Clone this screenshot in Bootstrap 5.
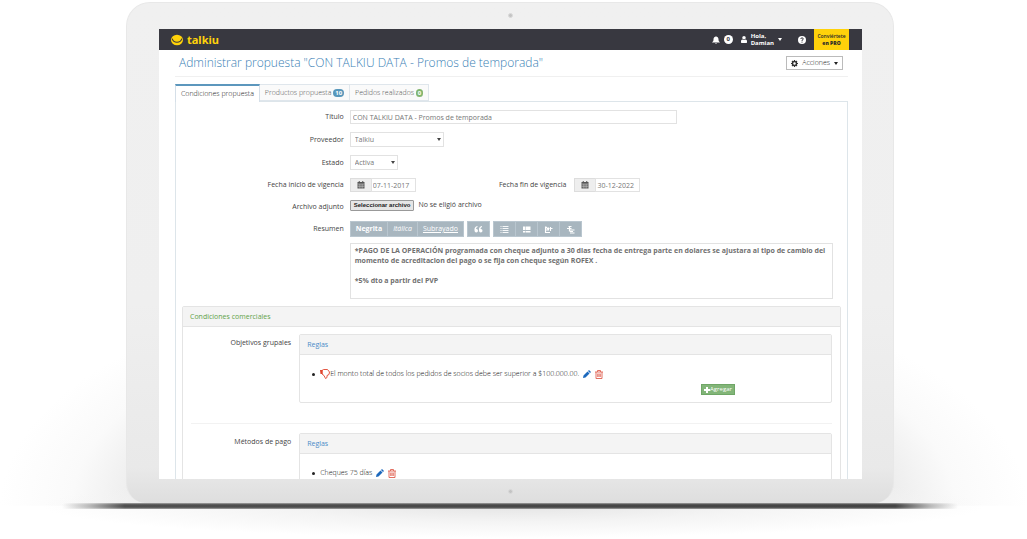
<!DOCTYPE html>
<html lang="es">
<head>
<meta charset="utf-8">
<meta name="viewport" content="width=device-width, initial-scale=1">
<title>Talkiu - Administrar propuesta</title>
<link href="https://cdn.jsdelivr.net/npm/bootstrap@5.3.0/dist/css/bootstrap.min.css" rel="stylesheet">
<style>
body{font-family:"Open Sans","Liberation Sans",sans-serif;font-size:7px;line-height:10px;color:#444;background:#fff;overflow-x:hidden}
svg{display:block;flex:none}
.stage{padding:2px 7px 29px 0;background:radial-gradient(ellipse 46% 6% at 50% 94%,#e4e4e4 0,#f4f4f4 50%,transparent 100%) no-repeat,radial-gradient(ellipse 50% 46% at 50% 100%,#e6e6e6 0,#ededed 74%,#fafafa 86%,#fff 100%) 0 0/100% 94% no-repeat}
.device{max-width:768px;padding:10px 31px 9px 32px;border:1px solid #e8e8e8;border-bottom:0;border-radius:24px 24px 20px 20px;background:linear-gradient(#f0f0f0 0,#efefef 60%,#e9e9e9 93%,#dedede 100%)}
.lens{width:5px;height:5px;border-radius:50%;background:#c4c4c4;border:1px solid #dadada}
.screen{aspect-ratio:703/450;overflow:hidden;background:#fff;margin:11px 0 10px}
.base{max-width:896px;height:6px;background:linear-gradient(rgba(255,255,255,.5) 0,transparent 30%,transparent 70%,rgba(255,255,255,.5) 100%),linear-gradient(90deg,transparent,#bbb 3%,#505050 7%,#484848 50%,#444 93%,#bbb 97%,transparent)}
.topbar{background:#383840;height:21px;color:#fff;padding:0 13px 0 12px}
.brand{color:#ffd20a;font:bold 11px/20px "Noto Sans","Open Sans",sans-serif}
.topbar a,.topbar button{color:#fff;text-decoration:none;border:0;background:none;padding:0;font-size:6px;line-height:7px;text-align:left}
.topbar .count{background:#fff;color:#383840;border-radius:50%;width:9px;height:9px;line-height:9px;text-align:center;font-weight:bold}
.topbar .pro{background:#ffd20a;color:#26262b;width:35px;height:21px;text-align:center;padding-top:4px;font-size:5px;font-weight:600}
.caret{display:inline-block;border:2px solid transparent;border-top:3px solid currentColor;border-bottom:0}
.heading{margin:0 14px 7px 16px;padding:0 5px 0 4px;height:27px;border-bottom:1px solid #f0f0f0}
.heading h1{font-size:12px;line-height:16px;font-weight:300;color:#3a7fb5}
.btn-acc{border:1px solid #bbb;border-radius:0;font-size:7px;font-weight:300;line-height:12px;padding:0 4px;color:#222;background:#fff}
.tabs{margin:0 14px 0 16px;border:0}
.tabs .nav-link{border:1px solid #dfe6ec;border-left-width:0;border-radius:0;padding:3px 5px;height:17px;font-size:7px;font-weight:300;line-height:10px;color:#555;background:#fafafa;margin:0}
.tabs .nav-link.active{border:1px solid #d5dfe8;border-top:2px solid #5c97bd;border-bottom:0;background:#fff;color:#222;height:18px;margin-bottom:-1px;padding-top:3px}
.pill{display:inline-block;font-size:6px;line-height:8px;padding:0 2px;border-radius:4px;color:#fff;font-weight:bold}
.pill-blue{background:#5897bb}.pill-green{background:#82b56f}
.sheet{margin:0 14px 0 16px;border:1px solid #dde5ea;padding:4px 6px 20px}
.sheet .row{--bs-gutter-x:6px}
.form-rows>.row{margin:0;min-height:22px;align-items:center}
.form-rows>.row.tall{min-height:23px}
.form-rows label,.rule-name{text-align:right}
.form-control,.form-select{font-size:7px;line-height:10px;color:#777;border:1px solid #e2e2e2;border-radius:0;min-height:0;padding:1px 2px;height:14px;background-color:#fff}
.form-select{height:15px;padding:1px 4px;appearance:none;background-image:none}
.pick{position:relative;display:inline-block}
.pick .caret{position:absolute;right:3px;top:6px;color:#444;pointer-events:none}
.w-title{width:67%}
.w-prov{width:94px}.w-state{width:48px}
.date-group{width:66px}
.date-group .input-group-text{padding:0 6px;border:1px solid #ddd;border-radius:0;background:#eee;color:#555;height:14px}
.date-group .form-control{padding:1px}
.btn-file{font:bold 6px/9px "Liberation Sans",sans-serif;border:1px solid #999;border-radius:1px;background:#e6e6e6;color:#222;padding:0 3px}
.tools{gap:3px}
.tools .btn{border:1px solid #b9c6cf;border-radius:0;background:#a8b6bf;color:#fff;font-size:7px;line-height:10px;padding:2px 5px;height:16px}
.tools .btn.ico{padding:2px 6px}
.editor-cell{padding-top:3px}
.editor{height:56px;resize:none;padding:2px 4px;font-weight:700;color:#707070;overflow:hidden}
.panel{border:1px solid #e4e4e4;border-radius:2px;background:#fff}
.terms{margin-top:7px}
.panel-head{background:#f4f4f4;border-bottom:1px solid #e4e4e4;padding:5px 7px;height:20px;font-size:7px;line-height:10px;font-weight:400;margin:0}
.green{color:#62a349}.blue{color:#4b8bc8}
.rules{padding:7px 8px}
.rules .row{--bs-gutter-x:8px}
.rules .panel-body{padding:14px 7px 7px 20px}
.rules ul{margin:0;padding:0;list-style:none;font-weight:300;color:#111}
.rules li{position:relative}
.rules li::before{content:"";position:absolute;left:-8px;top:4px;width:3px;height:3px;border-radius:50%;background:#222}
.act{border:0;background:none;padding:0}
.btn-add{background:#82b578;border:1px solid #6fa666;border-radius:0;color:#fff;font-size:6px;line-height:9px;padding:0 2px}
.add-line{padding-right:89px;margin-top:5px}
.rules hr{margin:20px 0 9px;border-color:#ccc}
</style>
</head>
<body>
<main class="stage">
<div class="device mx-auto">
<div class="lens mx-auto"></div>
<div class="screen">
<header class="topbar d-flex align-items-center">
<a href="#" class="d-flex align-items-center me-auto"><svg width="12" height="12" viewBox="0 0 12 12"><ellipse cx="6" cy="6" rx="6" ry="5.300" fill="#ffd20a"/><path d="M1.200 4.600q1 3.600 4.800 3.600t4.800-3.600" fill="none" stroke="#383840" stroke-width="1.100"/></svg><span class="brand ms-1">talkiu</span></a>
<a href="#" class="d-flex align-items-center gap-1 me-2" aria-label="Notificaciones"><svg width="8" height="8" viewBox="0 0 16 16" fill="#fff"><path d="M8 0l1 1.500C12 2 13 4.500 13 7c0 3 1 4 3 6H0c2-2 3-3 3-6 0-2.500 1-5 4-5.500zM6 14h4q-2 3-4 0z"/></svg><span class="count">0</span></a>
<button class="d-flex align-items-center" type="button"><svg width="6" height="7" viewBox="0 0 12 14" fill="#fff"><circle cx="6" cy="3.500" r="3.500"/><path d="M0 13V10q0-3 3-3 3 2 6 0 3 0 3 3v3q-1 1-2 1H2q-1 0-2-1z"/></svg><span class="ms-1"><b class="d-block">Hola,</b><b class="d-block">Damian</b></span><i class="caret ms-1"></i></button>
<a href="#" class="ms-3 me-2" aria-label="Ayuda"><svg width="8" height="8" viewBox="0 0 16 16"><circle cx="8" cy="8" r="8" fill="#fff"/><path d="M5.500 6q.3-2.300 2.600-2.300T10.600 6Q10.600 7.300 8 8.600V10M8 11.300v2" fill="none" stroke="#383840" stroke-width="2"/></svg></a>
<a href="#" class="pro">Conviértete<br><b>en PRO</b></a>
</header>
<div class="heading d-flex align-items-center justify-content-between">
<h1 class="m-0">Administrar propuesta "CON TALKIU DATA - Promos de temporada"</h1>
<button class="btn btn-acc d-flex align-items-center gap-1" type="button"><svg width="7" height="7" viewBox="0 0 14 14"><circle cx="7" cy="7" r="4" fill="none" stroke="#333" stroke-width="3"/><path d="M7 0v3M7 11v3M0 7h3M11 7h3M2 2l2 2M10 10l2 2M12 2l-2 2M4 10l-2 2" stroke="#333" stroke-width="2.400"/></svg>Acciones <i class="caret"></i></button>
</div>
<nav class="nav nav-tabs tabs">
<a class="nav-link active" href="#">Condiciones propuesta</a>
<a class="nav-link" href="#">Productos propuesta <span class="pill pill-blue">10</span></a>
<a class="nav-link" href="#">Pedidos realizados <span class="pill pill-green">0</span></a>
</nav>
<form class="sheet">
<div class="form-rows">
<div class="row"><label class="col-3" for="titulo">Título</label><div class="col-9"><input id="titulo" class="form-control w-title" value="CON TALKIU DATA - Promos de temporada"></div></div>
<div class="row tall"><label class="col-3" for="prov">Proveedor</label><div class="col-9 d-flex"><span class="pick w-prov"><select id="prov" class="form-select"><option>Talkiu</option></select><i class="caret"></i></span></div></div>
<div class="row tall"><label class="col-3" for="estado">Estado</label><div class="col-9 d-flex"><span class="pick w-state"><select id="estado" class="form-select"><option>Activa</option></select><i class="caret"></i></span></div></div>
<div class="row"><label class="col-3" for="ini">Fecha inicio de vigencia</label>
<div class="col-2"><div class="input-group date-group flex-nowrap"><span class="input-group-text"><svg width="8" height="8" viewBox="0 0 16 16"><path d="M1 2h14v13H1z" fill="#555"/><path d="M1 6h14M4.500 6v9M8 6v9M11.500 6v9M1 10.500h14" stroke="#ddd"/><path d="M4.500 0v4M11.500 0v4" stroke="#555" stroke-width="2"/></svg></span><input id="ini" class="form-control" value="07-11-2017"></div></div>
<label class="col-2 px-0" for="fin">Fecha fin de vigencia</label>
<div class="col-3 ps-2"><div class="input-group date-group flex-nowrap"><span class="input-group-text"><svg width="8" height="8" viewBox="0 0 16 16"><path d="M1 2h14v13H1z" fill="#555"/><path d="M1 6h14M4.500 6v9M8 6v9M11.500 6v9M1 10.500h14" stroke="#ddd"/><path d="M4.500 0v4M11.500 0v4" stroke="#555" stroke-width="2"/></svg></span><input id="fin" class="form-control" value="30-12-2022"></div></div></div>
<div class="row"><label class="col-3" for="archivo">Archivo adjunto</label><div class="col-9 d-flex align-items-center pb-1"><input id="archivo" type="file" class="d-none"><button type="button" class="btn-file" onclick="document.getElementById('archivo').click()">Seleccionar archivo</button><span class="ms-1">No se eligió archivo</span></div></div>
<div class="row"><label class="col-3" for="resumen">Resumen</label><div class="col-9 d-flex tools">
<div class="btn-group"><button type="button" class="btn"><b>Negrita</b></button><button type="button" class="btn"><i>Itálica</i></button><button type="button" class="btn"><u>Subrayado</u></button></div>
<button type="button" class="btn ico" aria-label="Cita"><svg width="9" height="9" viewBox="0 0 18 18" fill="#fff"><path d="M7 2v2Q4 5 4 8h1q3 0 3 3.500T4.500 15 1 11Q0 3 7 2z"/><path d="M16 2v2q-3 1-3 4h1q3 0 3 3.500T13.500 15 10 11Q9 3 16 2z"/></svg></button>
<div class="btn-group"><button type="button" class="btn ico" aria-label="Lista"><svg width="9" height="9" viewBox="0 0 18 18"><path d="M1 3h2M5 3h12M1 7h2M5 7h12M1 11h2M5 11h12M1 15h2M5 15h12" stroke="#fff" stroke-width="1.800"/></svg></button><button type="button" class="btn ico" aria-label="Lista numerada"><svg width="9" height="9" viewBox="0 0 18 18" fill="#fff"><path d="M2 3h4v7H2zM7 3h10v7H7zM2 12h4v3H2zM7 12h10v3H7z"/></svg></button><button type="button" class="btn ico" aria-label="Reducir sangría"><svg width="9" height="9" viewBox="0 0 18 18"><path d="M3 3v12h9M4 4l5 5M9 5v5H4M11 7h6M13 4v8" fill="none" stroke="#fff" stroke-width="2.200"/></svg></button><button type="button" class="btn ico" aria-label="Aumentar sangría"><svg width="9" height="9" viewBox="0 0 18 18"><path d="M5 3h6M2 7h9M8 10h9M8 13h6M8 16h9M7 3v10" fill="none" stroke="#fff" stroke-width="2.400"/></svg></button></div>
</div></div>
<div class="row"><div class="col-9 offset-3 editor-cell pe-2"><textarea id="resumen" class="form-control editor">*PAGO DE LA OPERACIÓN programada con cheque adjunto a 30 dias fecha de entrega parte en dolares se ajustara al tipo de cambio del momento de acreditacion del pago o se fija con cheque según ROFEX .

*5% dto a partir del PVP</textarea></div></div>
</div>
<section class="panel terms">
<h2 class="panel-head green">Condiciones comerciales</h2>
<div class="rules">
<div class="row"><div class="col-2 pt-1 rule-name">Objetivos grupales</div><div class="col-10"><div class="panel"><h3 class="panel-head blue">Reglas</h3><div class="panel-body">
<ul><li class="d-flex align-items-center"><svg width="10" height="10" viewBox="0 0 20 20"><path d="M4 3l3-2h8l4 5-1 5-4 2v4l-3 2-3-6-4-3z" fill="#fff" stroke="#e0452f" stroke-width="1.800"/><path d="M0 2h5v8H1z" fill="#e0452f"/></svg><span>El monto total de todos los pedidos de socios debe ser superior a $100.000.00.</span><button type="button" class="act ms-1" aria-label="Editar"><svg width="8" height="8" viewBox="0 0 16 16" fill="#1c69bd"><path d="M0 16l1-5 8-8 4 4-8 8zM10 2l2-2 4 4-2 2z"/></svg></button><button type="button" class="act ms-1" aria-label="Eliminar"><svg width="8" height="9" viewBox="0 0 16 18"><path d="M0 4h16M5 4V1h6v3M2 4v13h12V4M5.500 7v7M8 7v7M10.500 7v7" fill="none" stroke="#e06050" stroke-width="1.800"/></svg></button></li></ul>
<div class="add-line d-flex justify-content-end"><button type="button" class="btn-add d-flex align-items-center"><svg width="6" height="6" viewBox="0 0 6 6"><path d="M3 0v6M0 3h6" stroke="#fff" stroke-width="2"/></svg>Agregar</button></div>
</div></div></div></div>
<hr>
<div class="row"><div class="col-2 pt-1 rule-name">Métodos de pago</div><div class="col-10"><div class="panel"><h3 class="panel-head blue">Reglas</h3><div class="panel-body">
<ul><li class="d-flex align-items-center"><span>Cheques 75 días</span><button type="button" class="act ms-1" aria-label="Editar"><svg width="8" height="8" viewBox="0 0 16 16" fill="#1c69bd"><path d="M0 16l1-5 8-8 4 4-8 8zM10 2l2-2 4 4-2 2z"/></svg></button><button type="button" class="act ms-1" aria-label="Eliminar"><svg width="8" height="9" viewBox="0 0 16 18"><path d="M0 4h16M5 4V1h6v3M2 4v13h12V4M5.500 7v7M8 7v7M10.500 7v7" fill="none" stroke="#e06050" stroke-width="1.800"/></svg></button></li></ul>
</div></div></div></div>
</div>
</section>
</form>
</div>
<div class="lens mx-auto"></div>
</div>
<div class="base mx-auto"></div>
</main>
<script src="https://cdn.jsdelivr.net/npm/bootstrap@5.3.0/dist/js/bootstrap.bundle.min.js"></script>
</body>
</html>
